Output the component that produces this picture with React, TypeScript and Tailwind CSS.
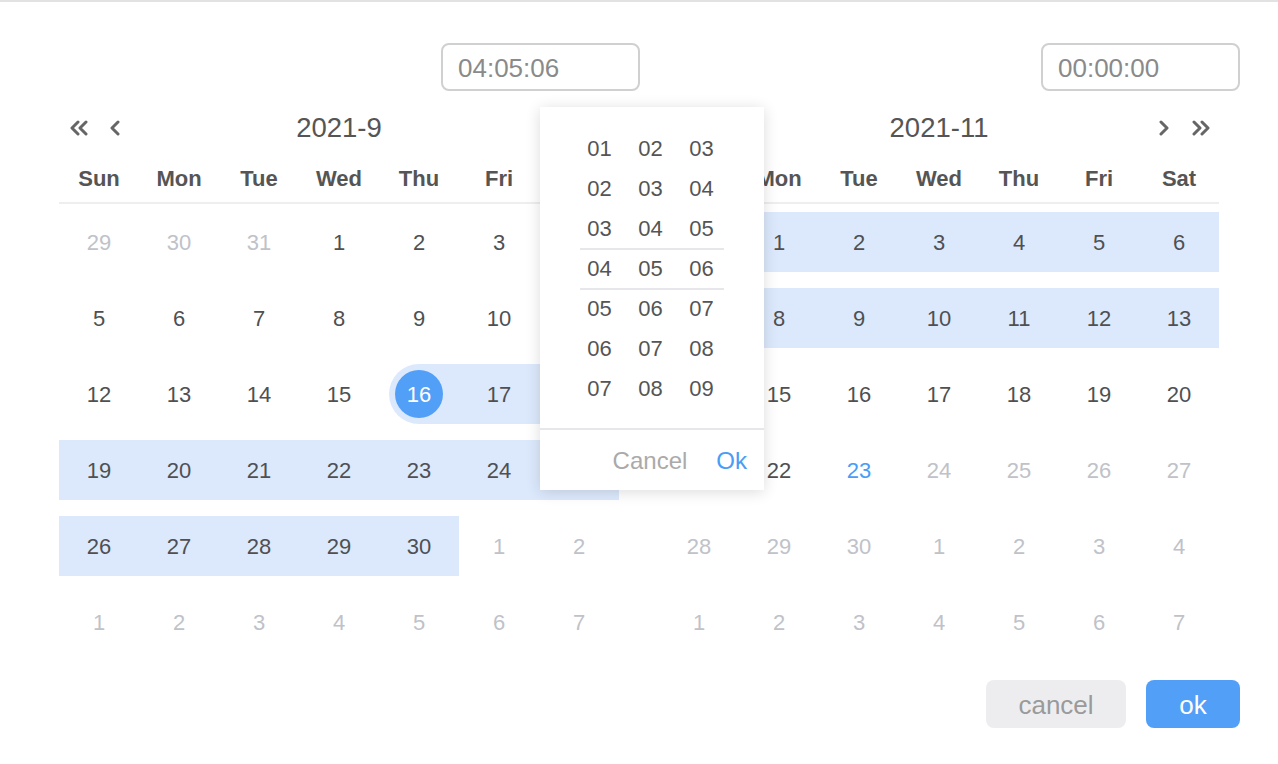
import React from 'react';

type Day = {
  n: number;
  kind?: 'cur' | 'other' | 'today';
  band?: 'full' | 'start';
};

const weekdays = ['Sun', 'Mon', 'Tue', 'Wed', 'Thu', 'Fri', 'Sat'];

const c = (n: number, band?: 'full' | 'start'): Day => ({ n, kind: 'cur', band });
const o = (n: number, band?: 'full' | 'start'): Day => ({ n, kind: 'other', band });

const september: Day[][] = [
  [o(29), o(30), o(31), c(1), c(2), c(3), c(4)],
  [c(5), c(6), c(7), c(8), c(9), c(10), c(11)],
  [c(12), c(13), c(14), c(15), c(16, 'start'), c(17, 'full'), c(18, 'full')],
  [19, 20, 21, 22, 23, 24, 25].map((n) => c(n, 'full')),
  [c(26, 'full'), c(27, 'full'), c(28, 'full'), c(29, 'full'), c(30, 'full'), o(1), o(2)],
  [1, 2, 3, 4, 5, 6, 7].map((n) => o(n)),
];

const november: Day[][] = [
  [o(31, 'full'), c(1, 'full'), c(2, 'full'), c(3, 'full'), c(4, 'full'), c(5, 'full'), c(6, 'full')],
  [7, 8, 9, 10, 11, 12, 13].map((n) => c(n, 'full')),
  [14, 15, 16, 17, 18, 19, 20].map((n) => c(n)),
  [c(21), c(22), { n: 23, kind: 'today' }, o(24), o(25), o(26), o(27)],
  [28, 29, 30, 1, 2, 3, 4].map((n) => o(n)),
  [1, 2, 3, 4, 5, 6, 7].map((n) => o(n)),
];

function Chevron({ double, right }: { double?: boolean; right?: boolean }) {
  const w = double ? 19 : 11;
  return (
    <svg
      width={w}
      height={16}
      viewBox={`0 0 ${w} 16`}
      fill="none"
      stroke="#666"
      strokeWidth={3}
      strokeLinecap="round"
      strokeLinejoin="round"
      className={right ? 'rotate-180' : ''}
    >
      <path d="M9 2 L3 8 L9 14" />
      {double && <path d="M17 2 L11 8 L17 14" />}
    </svg>
  );
}

function DayCell({ d }: { d: Day }) {
  const color =
    d.kind === 'other'
      ? 'text-[#c0c2c8]'
      : d.kind === 'today'
        ? 'text-[#4a9cf5]'
        : 'text-[#505050]';

  if (d.band === 'start') {
    return (
      <div className="flex h-[76px] items-center py-2">
        <div className="ml-[10px] flex h-[60px] flex-1 items-center rounded-l-full bg-[#dce9fc] pl-[6px]">
          <div className="flex h-12 w-12 items-center justify-center rounded-full bg-[#529ff8] pt-[2px] text-[22px] leading-none text-white">
            {d.n}
          </div>
        </div>
      </div>
    );
  }

  return (
    <div className="flex h-[76px] items-center py-2">
      <div
        className={`flex h-[60px] flex-1 items-center justify-center pt-[2px] text-[22px] leading-none ${color} ${
          d.band === 'full' ? 'bg-[#dce9fc]' : ''
        }`}
      >
        {d.n}
      </div>
    </div>
  );
}

function Calendar({
  title,
  weeks,
  side,
}: {
  title: string;
  weeks: Day[][];
  side: 'left' | 'right';
}) {
  return (
    <div className="pl-[19px] pr-[21px]">
      <div className="mt-[17px] grid h-10 grid-cols-[1fr_auto_1fr] items-center">
        <div className="flex items-center gap-[21px] pl-[10px]">
          {side === 'left' && (
            <>
              <Chevron double />
              <Chevron />
            </>
          )}
        </div>
        <div className="text-[27.5px] leading-none text-[#555]">{title}</div>
        <div className="flex items-center justify-end gap-[22px] pr-[8px]">
          {side === 'right' && (
            <>
              <Chevron right />
              <Chevron double right />
            </>
          )}
        </div>
      </div>
      <div className="grid h-[56px] grid-cols-7 items-center border-b-2 border-[#eeeeee] pt-[8px]">
        {weekdays.map((w) => (
          <div key={w} className="text-center text-[22px] font-bold leading-none text-[#555]">
            {w}
          </div>
        ))}
      </div>
      <div className="flex flex-col">
        {weeks.map((week, i) => (
          <div key={i} className="grid grid-cols-7">
            {week.map((d, j) => (
              <DayCell key={j} d={d} />
            ))}
          </div>
        ))}
      </div>
    </div>
  );
}

function TimeInput({ value }: { value: string }) {
  return (
    <div className="mt-[41px] flex justify-end">
      <div className="flex h-12 w-[199px] items-center rounded-lg border-2 border-[#d0d0d0] px-[15px] pt-[1px] text-[26px] leading-none text-[#8a8a8a]">
        {value}
      </div>
    </div>
  );
}

const wheel = [
  ['01', '02', '03'],
  ['02', '03', '04'],
  ['03', '04', '05'],
  ['04', '05', '06'],
  ['05', '06', '07'],
  ['06', '07', '08'],
  ['07', '08', '09'],
];

function TimePopup() {
  return (
    <div className="absolute left-[540px] top-[105px] flex w-[224px] flex-col bg-white shadow-[0_2px_14px_rgba(0,0,0,0.14)]">
      <div className="relative mb-5 ml-[34px] mt-[21px] w-[153px]">
        <div className="absolute left-[6px] right-[3px] top-[120px] h-[42px] border-y-2 border-[#e6e6eb]" />
        {wheel.map((row, i) => (
          <div key={i} className="grid h-10 grid-cols-3 items-center pt-[2px]">
            {row.map((v, j) => (
              <div key={j} className="text-center text-[22px] leading-none text-[#555]">
                {v}
              </div>
            ))}
          </div>
        ))}
      </div>
      <div className="flex h-[62px] items-center justify-end gap-[29px] border-t-2 border-[#e6e6eb] pr-[17px] pt-[1px] text-[24px] leading-none">
        <span className="text-[#aaaaaa]">Cancel</span>
        <span className="text-[#4a9cf5]">Ok</span>
      </div>
    </div>
  );
}

export default function App() {
  return (
    <div className="relative h-[764px] w-full overflow-hidden border-t-2 border-[#e2e2e2] bg-white font-['Liberation_Sans',Arial,sans-serif]">
      <div className="ml-10 w-[1200px]">
        <div className="flex">
          <div className="w-[600px]">
            <TimeInput value="04:05:06" />
            <Calendar title="2021-9" weeks={september} side="left" />
          </div>
          <div className="w-[600px]">
            <TimeInput value="00:00:00" />
            <Calendar title="2021-11" weeks={november} side="right" />
          </div>
        </div>
        <div className="mt-5 flex justify-end gap-5">
          <button className="flex h-12 w-[140px] items-center justify-center rounded-lg bg-[#ededef] pt-[2px] text-[26px] leading-none text-[#9a9a9a]">
            cancel
          </button>
          <button className="flex h-12 w-[94px] items-center justify-center rounded-lg bg-[#529ff8] pt-[2px] text-[26px] leading-none text-white">
            ok
          </button>
        </div>
      </div>
      <TimePopup />
    </div>
  );
}
